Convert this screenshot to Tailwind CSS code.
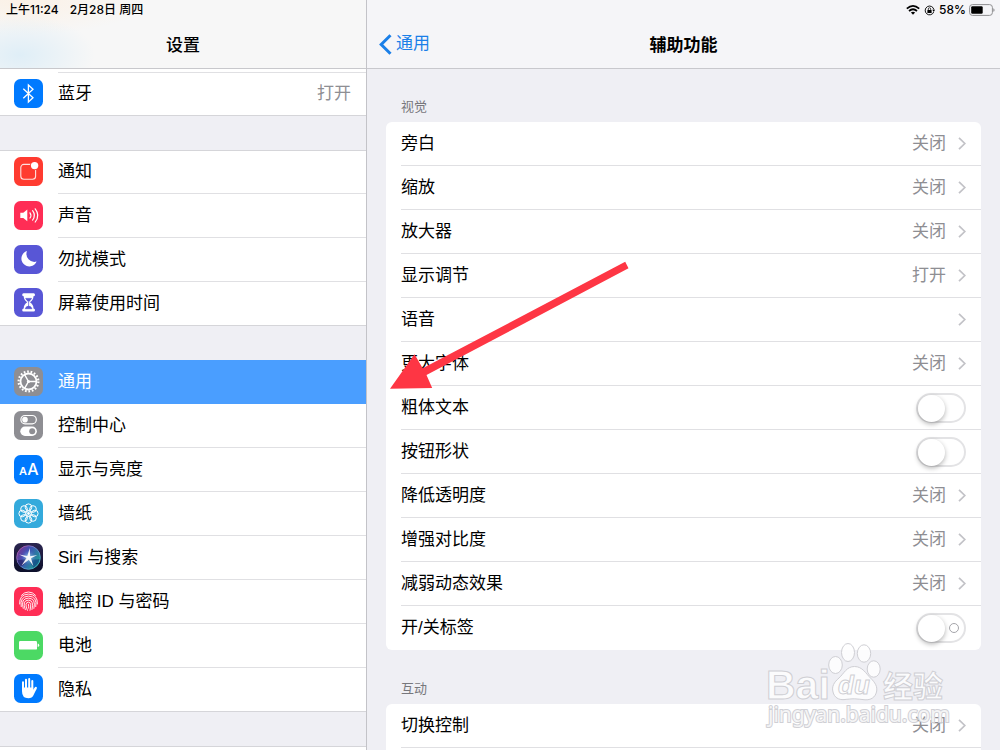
<!doctype html>
<html lang="zh-CN">
  <head>
    <meta charset="UTF-8" />
    <meta name="viewport" content="width=device-width, initial-scale=1.0" />
    <title>设置 - 辅助功能</title>
    <script src="https://cdn.jsdelivr.net/npm/@tailwindcss/browser@4"></script>
  </head>
  <body
    class="relative flex h-screen overflow-hidden bg-[#efeff4] font-['Liberation_Sans','Noto_Sans_CJK_SC',sans-serif] text-[17px] leading-6 text-black"
  >
    <svg class="hidden">
      <symbol id="chevron" viewBox="0 0 8 13">
        <path d="M1 .8 6.8 6.5 1 12.2" fill="none" stroke="#c2c2c7" stroke-width="1.7" />
      </symbol>
    </svg>

    <!-- Sidebar -->
    <aside class="flex w-[367px] shrink-0 flex-col overflow-hidden border-r border-[#c3c3c8]">
      <header
        class="h-[69px] shrink-0 border-b border-[#c8c8cc] bg-[#f7f7f7] bg-[radial-gradient(ellipse_75px_40px_at_20px_55px,#dfeef7,transparent),radial-gradient(ellipse_130px_35px_at_20px_0px,#fbf1e6,transparent)]"
      >
        <div class="flex h-5 items-center gap-[11px] pl-[6px] font-['Inter','Noto_Sans_CJK_SC',sans-serif] text-[12px] font-medium">
          <span>上午11:24</span>
          <span>2月28日 周四</span>
        </div>
        <h1 class="flex h-12 items-center justify-center font-['Noto_Sans_CJK_SC',sans-serif] font-medium">设置</h1>
      </header>

      <nav>
        <div class="bg-white pl-[58px]">
          <div class="h-1 border-b border-[#e0e0e3]"></div>
        </div>
        <ul class="border-b border-[#d5d5d9] bg-white">
          <li>
            <a href="#bluetooth" class="flex h-[42px] items-center gap-[15px] pl-[14px]">
              <svg class="mb-0.5 size-[29px] shrink-0" viewBox="0 0 29 29">
                <rect width="29" height="29" rx="6.5" fill="#007aff" />
                <path d="M9.3 9.7 19 18.8l-4.6 4.2V6l4.6 4.2-9.7 9.1" fill="none" stroke="#fff" stroke-width="1.3" />
              </svg>
              <span class="flex-1">蓝牙</span>
              <span class="pr-[15px] text-[#8e8e93]">打开</span>
            </a>
          </li>
        </ul>

        <ul class="mt-[34px] border-t border-[#d5d5d9] bg-white">
          <li>
            <a href="#notifications" class="-mt-px flex h-11 items-center gap-[15px] pl-[14px]">
              <svg class="mb-0.5 size-[29px] shrink-0" viewBox="0 0 29 29">
                <rect width="29" height="29" rx="6.5" fill="#ff3b30" />
                <rect x="6.8" y="7.4" width="14.8" height="14.8" rx="3" fill="none" stroke="#fff" stroke-opacity=".85" stroke-width="1.1" />
                <circle cx="20.6" cy="8.6" r="4.6" fill="#ff3b30" />
                <circle cx="20.6" cy="8.6" r="3.7" fill="#fff" />
              </svg>
              <span class="flex h-11 flex-1 items-center border-b border-[#e0e0e3]">通知</span>
            </a>
          </li>
          <li>
            <a href="#sounds" class="flex h-11 items-center gap-[15px] pl-[14px]">
              <svg class="mb-0.5 size-[29px] shrink-0" viewBox="0 0 29 29">
                <rect width="29" height="29" rx="6.5" fill="#ff2d55" />
                <path d="M6.3 11.8h3l4-3.2v11.6l-4-3.2h-3z" fill="#fff" />
                <path d="M16 11.8q1.8 2.6 0 5.2M18.6 9.7q3.6 4.7 0 9.4M21.2 7.8q5.2 6.6 0 13.2" fill="none" stroke="#fff" stroke-width="1.2" stroke-linecap="round" />
              </svg>
              <span class="flex h-11 flex-1 items-center border-b border-[#e0e0e3]">声音</span>
            </a>
          </li>
          <li>
            <a href="#dnd" class="flex h-11 items-center gap-[15px] pl-[14px]">
              <svg class="mb-0.5 size-[29px] shrink-0" viewBox="0 0 29 29">
                <rect width="29" height="29" rx="6.5" fill="#5856d6" />
                <path d="M13 6A7.9 7.9 0 1 0 22.6 16.6 8 8 0 0 1 13 6Z" fill="#fff" />
              </svg>
              <span class="flex h-11 flex-1 items-center border-b border-[#e0e0e3]">勿扰模式</span>
            </a>
          </li>
          <li>
            <a href="#screen-time" class="flex h-11 items-center gap-[15px] border-b border-[#d5d5d9] pl-[14px]">
              <svg class="mb-0.5 size-[29px] shrink-0" viewBox="0 0 29 29">
                <rect width="29" height="29" rx="6.5" fill="#5856d6" />
                <path d="M9.5 5.2h10.2q1.3 0 1.3 1.5t-1.5 1.5q0 3.600-3.500 6.100 3.500 2.500 3.500 6.100 1.500 0 1.500 1.500t-1.300 1.500H9.500q-1.300 0-1.300-1.500t1.500-1.500q0-3.600 3.500-6.100-3.500-2.500-3.500-6.100-1.500 0-1.500-1.500t1.300-1.500Z" fill="#fff" />
                <path d="M11.7 10.4h5.8q-.8 1.7-2.9 3.4-2.100-1.700-2.900-3.400ZM14.600 14v4.500M11.300 20.700q.5-2.200 3.300-2.600 2.800.4 3.300 2.600Z" fill="#5856d6" stroke="#5856d6" stroke-width=".7" />
              </svg>
              <span>屏幕使用时间</span>
            </a>
          </li>
        </ul>

        <ul class="mt-[34px] border-t border-[#d5d5d9] bg-white">
          <li>
            <a href="#general" aria-current="page" class="-mt-px flex h-11 items-center gap-[15px] bg-[#4a9eff] pl-[14px] text-white">
              <svg class="mb-0.5 size-[29px] shrink-0" viewBox="0 0 29 29">
                <rect width="29" height="29" rx="6.5" fill="#8e8e93" />
                <g fill="none" stroke="#fff">
                  <circle cx="14.5" cy="14.5" r="9.9" stroke-width="2.2" stroke-dasharray="1.7 1.76" />
                  <circle cx="14.5" cy="14.5" r="8" stroke-width="1.8" />
                  <path d="M14.5 14.5h8M14.5 14.5l-4-7M14.5 14.5l-4 7" stroke-width="1.5" />
                </g>
                <circle cx="14.5" cy="14.5" r="1.6" fill="#fff" />
              </svg>
              <span>通用</span>
            </a>
          </li>
          <li>
            <a href="#control-center" class="flex h-11 items-center gap-[15px] pl-[14px]">
              <svg class="mb-0.5 size-[29px] shrink-0" viewBox="0 0 29 29">
                <rect width="29" height="29" rx="6.5" fill="#8e8e93" />
                <rect x="6.9" y="4.5" width="15.4" height="8.3" rx="4.150" fill="none" stroke="#fff" stroke-width="1.2" />
                <circle cx="11" cy="8.650" r="2.800" fill="#fff" />
                <rect x="6.3" y="15.6" width="16.6" height="9.3" rx="4.650" fill="#fff" />
                <circle cx="18.2" cy="20.250" r="3" fill="#8e8e93" />
              </svg>
              <span class="flex h-11 flex-1 items-center border-b border-[#e0e0e3]">控制中心</span>
            </a>
          </li>
          <li>
            <a href="#display" class="flex h-11 items-center gap-[15px] pl-[14px]">
              <svg class="mb-0.5 size-[29px] shrink-0" viewBox="0 0 29 29">
                <rect width="29" height="29" rx="6.5" fill="#007aff" />
                <g fill="#fff" font-family="Inter, sans-serif" text-anchor="middle">
                  <text x="9" y="20" font-size="11" font-weight="600">A</text>
                  <text x="18.8" y="20" font-size="16" font-weight="500">A</text>
                </g>
              </svg>
              <span class="flex h-11 flex-1 items-center border-b border-[#e0e0e3]">显示与亮度</span>
            </a>
          </li>
          <li>
            <a href="#wallpaper" class="flex h-11 items-center gap-[15px] pl-[14px]">
              <svg class="mb-0.5 size-[29px] shrink-0" viewBox="0 0 29 29">
                <rect width="29" height="29" rx="6.5" fill="#34aadc" />
                <g fill="none" stroke="#fff" stroke-width="1">
                  <circle cx="14.5" cy="8.2" r="3.3" />
                  <circle cx="19" cy="10" r="3.3" />
                  <circle cx="20.8" cy="14.5" r="3.3" />
                  <circle cx="19" cy="19" r="3.3" />
                  <circle cx="14.5" cy="20.8" r="3.3" />
                  <circle cx="10" cy="19" r="3.3" />
                  <circle cx="8.2" cy="14.5" r="3.3" />
                  <circle cx="10" cy="10" r="3.3" />
                  <circle cx="14.5" cy="14.5" r="2.6" />
                </g>
                <circle cx="14.5" cy="14.5" r="1.4" fill="#fff" />
              </svg>
              <span class="flex h-11 flex-1 items-center border-b border-[#e0e0e3]">墙纸</span>
            </a>
          </li>
          <li>
            <a href="#siri" class="flex h-11 items-center gap-[15px] pl-[14px]">
              <svg class="mb-0.5 size-[29px] shrink-0" viewBox="0 0 29 29">
                <defs>
                  <linearGradient id="siri-bg" x1="0" y1="0" x2="0" y2="1">
                    <stop offset="0" stop-color="#2b2550" />
                    <stop offset="1" stop-color="#0c0f2a" />
                  </linearGradient>
                  <linearGradient id="siri-ring" x1="0" y1="0" x2="1" y2="1">
                    <stop offset="0" stop-color="#c04a9a" />
                    <stop offset=".5" stop-color="#6a88d8" />
                    <stop offset="1" stop-color="#39c6c0" />
                  </linearGradient>
                  <linearGradient id="siri-orb" x1="0" y1="0" x2="1" y2=".6">
                    <stop offset="0" stop-color="#8c2f86" />
                    <stop offset=".45" stop-color="#3f4fb4" />
                    <stop offset="1" stop-color="#1d9c94" />
                  </linearGradient>
                  <radialGradient id="siri-glow">
                    <stop offset="0" stop-color="#fff" />
                    <stop offset=".4" stop-color="#a4dcf4" stop-opacity=".6" />
                    <stop offset="1" stop-color="#4a55c8" stop-opacity="0" />
                  </radialGradient>
                </defs>
                <rect width="29" height="29" rx="6.5" fill="url(#siri-bg)" />
                <circle cx="14.5" cy="14.5" r="11.8" fill="url(#siri-orb)" stroke="url(#siri-ring)" stroke-width=".9" />
                <path d="M3.500 17q5 .5 9.500-2-1 6-6 8.500-3-2.500-3.500-6.500Z" fill="#2a2569" opacity=".8" />
                <path d="M16 16q5 1 9.500 0-1 5.500-6 8.500-3-3-3.500-8.500Z" fill="#134a86" opacity=".8" />
                <circle cx="14.5" cy="14.5" r="8" fill="url(#siri-glow)" opacity=".7" />
                <path d="m15.800 5 .3 8.300 7.200-1.300-6.300 3.300 2.400 8-4.600-6.500-7.300 5.700 5-7.500-7.500-3.500 8.300 1.500Z" fill="#fff" opacity=".9" />
              </svg>
              <span class="flex h-11 flex-1 items-center border-b border-[#e0e0e3]">Siri 与搜索</span>
            </a>
          </li>
          <li>
            <a href="#touch-id" class="flex h-11 items-center gap-[15px] pl-[14px]">
              <svg class="mb-0.5 size-[29px] shrink-0" viewBox="0 0 29 29">
                <rect width="29" height="29" rx="6.5" fill="#ff2d55" />
                <g fill="none" stroke="#fff" stroke-width=".9" stroke-linecap="round">
                  <path d="M7.5 8.3Q10.300 5 14.500 5t7 3.300" />
                  <path d="M5.600 17q-.5-9.600 8.900-9.900 9.400.3 8.900 9.900" />
                  <path d="M7.200 19.600q-1.800-10 7.300-10.500 9.100.5 7.300 10.500" />
                  <path d="M9.200 21.400q-3-9.900 5.300-10.300 7.800.4 5.400 10.300" />
                  <path d="M11.300 22.700q-3.600-9.300 3.200-9.600 5.700.3 3.500 9.400" />
                  <path d="M13.400 23.300q-3.400-8 1.100-8.200 3.600.3 1.500 8.200" />
                  <path d="M14.400 17.200q.4 2 .3 4" />
                </g>
              </svg>
              <span class="flex h-11 flex-1 items-center border-b border-[#e0e0e3]">触控 ID 与密码</span>
            </a>
          </li>
          <li>
            <a href="#battery" class="flex h-11 items-center gap-[15px] pl-[14px]">
              <svg class="mb-0.5 size-[29px] shrink-0" viewBox="0 0 29 29">
                <rect width="29" height="29" rx="6.5" fill="#4cd964" />
                <rect x="5" y="10" width="18" height="8.6" rx="1.2" fill="#fff" />
                <path d="M23.700 12.600q1.500.2 1.500 1.700t-1.500 1.700Z" fill="#fff" />
              </svg>
              <span class="flex h-11 flex-1 items-center border-b border-[#e0e0e3]">电池</span>
            </a>
          </li>
          <li>
            <a href="#privacy" class="flex h-11 items-center gap-[15px] border-b border-[#d5d5d9] pl-[14px]">
              <svg class="mb-0.5 size-[29px] shrink-0" viewBox="0 0 29 29">
                <rect width="29" height="29" rx="6.5" fill="#007aff" />
                <g fill="none" stroke="#fff" stroke-width="2" stroke-linecap="round">
                  <path d="M9 15V8.300M12 14V5.800M15.200 14V5M18.300 14V7" />
                  <path d="m18.500 18 3.400-4.300" />
                </g>
                <path d="M8 13.500h11.300v3.200l2.400-2.800 1.200.7q-2 3.600-3.300 6.400-1.500 3.300-5.200 3.300-6.400 0-6.400-7Z" fill="#fff" />
              </svg>
              <span>隐私</span>
            </a>
          </li>
        </ul>

        <div class="mt-[34px] h-11 border-t border-[#d5d5d9] bg-white"></div>
      </nav>
    </aside>

    <!-- Detail pane -->
    <main class="flex min-w-0 flex-1 flex-col overflow-hidden">
      <header class="h-[69px] shrink-0 border-b border-[#c8c8cd] bg-[#f5f5f8]">
        <div class="flex h-5 items-center justify-end gap-[3px] pr-[5px] font-['Inter',sans-serif] text-[12px] font-medium">
          <svg class="h-[10px] w-[14px]" viewBox="0 0 14 10">
            <g fill="none" stroke="#000" stroke-width="1.7">
              <path d="M.8 3.700q6.200-5.600 12.400 0" />
              <path d="M3 6q4-3.500 8 0" />
            </g>
            <path d="M7 9.700 4.900 7.500q2.100-1.600 4.200 0Z" />
          </svg>
          <svg class="mx-px size-[11px]" viewBox="0 0 12 12">
            <path d="M10.600 7.600A4.800 4.800 0 1 1 10.800 5" fill="none" stroke="#000" stroke-width="1" />
            <path d="m9 5.300h3l-1.300 2.200Z" />
            <rect x="3.7" y="5.4" width="4.6" height="3.4" rx=".4" />
            <path d="M4.700 5.600V4.300q0-1.300 1.300-1.300t1.300 1.300v1.300" fill="none" stroke="#000" stroke-width=".8" />
          </svg>
          <span>58%</span>
          <svg class="h-3 w-[26px]" viewBox="0 0 26 12">
            <rect x=".6" y=".6" width="22.8" height="10.8" rx="2.8" fill="none" stroke="#8f8f91" />
            <rect x="2.2" y="2.2" width="11.5" height="7.6" rx="1.2" />
            <path d="M24.300 4.200q1.300.4 1.300 1.800t-1.300 1.800Z" fill="#8f8f91" />
          </svg>
        </div>
        <div class="grid h-12 grid-cols-3 items-center">
          <a href="#general" class="flex items-center gap-1 pl-3 text-[#1a7fe8]">
            <svg class="h-[21px] w-[13px]" viewBox="0 0 13 21">
              <path d="M11.500 1.200 2.200 10.500l9.300 9.300" fill="none" stroke="#1a7fe8" stroke-width="3" />
            </svg>
            通用
          </a>
          <h2 class="text-center font-['Noto_Sans_CJK_SC',sans-serif] font-bold">辅助功能</h2>
        </div>
      </header>

      <div class="px-[19px]">
        <h3 class="flex h-[53px] items-end pb-[5px] pl-[15px] text-[13px] leading-5 text-[#77777c]">视觉</h3>
        <ul class="rounded-md bg-white pl-[15px]">
          <li>
            <a href="#voiceover" class="flex h-11 items-center gap-3 border-b border-[#e0e0e3] pr-[15px]">
              <span class="flex-1">旁白</span>
              <span class="text-[#8e8e93]">关闭</span>
              <svg class="h-[13px] w-2"><use href="#chevron" /></svg>
            </a>
          </li>
          <li>
            <a href="#zoom" class="flex h-11 items-center gap-3 border-b border-[#e0e0e3] pr-[15px]">
              <span class="flex-1">缩放</span>
              <span class="text-[#8e8e93]">关闭</span>
              <svg class="h-[13px] w-2"><use href="#chevron" /></svg>
            </a>
          </li>
          <li>
            <a href="#magnifier" class="flex h-11 items-center gap-3 border-b border-[#e0e0e3] pr-[15px]">
              <span class="flex-1">放大器</span>
              <span class="text-[#8e8e93]">关闭</span>
              <svg class="h-[13px] w-2"><use href="#chevron" /></svg>
            </a>
          </li>
          <li>
            <a href="#display-accommodations" class="flex h-11 items-center gap-3 border-b border-[#e0e0e3] pr-[15px]">
              <span class="flex-1">显示调节</span>
              <span class="text-[#8e8e93]">打开</span>
              <svg class="h-[13px] w-2"><use href="#chevron" /></svg>
            </a>
          </li>
          <li>
            <a href="#speech" class="flex h-11 items-center gap-3 border-b border-[#e0e0e3] pr-[15px]">
              <span class="flex-1">语音</span>
              <svg class="h-[13px] w-2"><use href="#chevron" /></svg>
            </a>
          </li>
          <li>
            <a href="#larger-text" class="flex h-11 items-center gap-3 border-b border-[#e0e0e3] pr-[15px]">
              <span class="flex-1">更大字体</span>
              <span class="text-[#8e8e93]">关闭</span>
              <svg class="h-[13px] w-2"><use href="#chevron" /></svg>
            </a>
          </li>
          <li class="flex h-11 items-center border-b border-[#e0e0e3] pr-[15px]">
            <label for="bold-text" class="flex-1">粗体文本</label>
            <input
              id="bold-text"
              type="checkbox"
              role="switch"
              class="h-[30px] w-[50px] appearance-none rounded-full border-2 border-[#e3e3e5] bg-white before:block before:size-[27px] before:rounded-full before:bg-white before:shadow-[0_2px_5px_#0000004d] checked:bg-[#4cd964] checked:before:ml-5"
            />
          </li>
          <li class="flex h-11 items-center border-b border-[#e0e0e3] pr-[15px]">
            <label for="button-shapes" class="flex-1">按钮形状</label>
            <input
              id="button-shapes"
              type="checkbox"
              role="switch"
              class="h-[30px] w-[50px] appearance-none rounded-full border-2 border-[#e3e3e5] bg-white before:block before:size-[27px] before:rounded-full before:bg-white before:shadow-[0_2px_5px_#0000004d] checked:bg-[#4cd964] checked:before:ml-5"
            />
          </li>
          <li>
            <a href="#reduce-transparency" class="flex h-11 items-center gap-3 border-b border-[#e0e0e3] pr-[15px]">
              <span class="flex-1">降低透明度</span>
              <span class="text-[#8e8e93]">关闭</span>
              <svg class="h-[13px] w-2"><use href="#chevron" /></svg>
            </a>
          </li>
          <li>
            <a href="#increase-contrast" class="flex h-11 items-center gap-3 border-b border-[#e0e0e3] pr-[15px]">
              <span class="flex-1">增强对比度</span>
              <span class="text-[#8e8e93]">关闭</span>
              <svg class="h-[13px] w-2"><use href="#chevron" /></svg>
            </a>
          </li>
          <li>
            <a href="#reduce-motion" class="flex h-11 items-center gap-3 border-b border-[#e0e0e3] pr-[15px]">
              <span class="flex-1">减弱动态效果</span>
              <span class="text-[#8e8e93]">关闭</span>
              <svg class="h-[13px] w-2"><use href="#chevron" /></svg>
            </a>
          </li>
          <li class="flex h-11 items-center pr-[15px]">
            <label for="on-off-labels" class="flex-1">开/关标签</label>
            <input
              id="on-off-labels"
              type="checkbox"
              role="switch"
              class="flex h-[30px] w-[50px] appearance-none items-center gap-1 rounded-full border-2 border-[#e3e3e5] bg-white before:size-[27px] before:rounded-full before:bg-white before:shadow-[0_2px_5px_#0000004d] after:size-[10px] after:rounded-full after:border after:border-[#a5a5aa] checked:flex-row-reverse checked:bg-[#4cd964]"
            />
          </li>
        </ul>

        <h3 class="flex h-[54px] items-end pb-[5px] pl-[15px] text-[13px] leading-5 text-[#77777c]">互动</h3>
        <ul class="rounded-t-md bg-white pl-[15px]">
          <li>
            <a href="#switch-control" class="flex h-11 items-center gap-3 border-b border-[#e0e0e3] pr-[15px]">
              <span class="flex-1">切换控制</span>
              <span class="text-[#8e8e93]">关闭</span>
              <svg class="h-[13px] w-2"><use href="#chevron" /></svg>
            </a>
          </li>
          <li class="h-11"></li>
        </ul>
      </div>
    </main>

    <!-- Red pointer drawn over the list -->
    <svg class="pointer-events-none absolute top-[255px] left-[380px] h-[140px] w-[260px]" viewBox="0 0 260 140">
      <path d="M10 133.700 34.500 99.300l8.200 14L245.200 6.800l3.300 6.500L46.500 120l5.700 13Z" fill="#fe3644" />
    </svg>

    <!-- Watermark -->
    <svg class="pointer-events-none absolute right-0 bottom-0 h-[120px] w-[250px]" viewBox="0 0 250 120">
      <g fill="#fff" fill-opacity=".8" stroke="#cfcfd4" stroke-width="1">
        <text x="16" y="69" font-family="Liberation Sans, sans-serif" font-size="41" font-weight="700">Bai</text>
        <ellipse cx="85.5" cy="35" rx="6.8" ry="8.5" />
        <ellipse cx="98" cy="22.5" rx="6.5" ry="9" />
        <ellipse cx="114" cy="23.5" rx="6.7" ry="8.7" />
        <ellipse cx="123.7" cy="39" rx="6.5" ry="8.2" />
        <path d="M104.500 36.500c-8 0-10.500 7-15.500 11.500-5 4.300-7.500 8.500-6 14 1.400 5.500 5.500 8 11 7.600 4-.4 7-.8 10.500-.8s7 .8 10.500 1c6 .3 10-2.300 11.500-7.800 1.300-5.500-1.500-9.500-6-14-4.500-4.300-8-11.500-16-11.500Z" />
        <text x="88" y="64" font-family="Liberation Sans, sans-serif" font-size="26" font-style="italic" font-weight="700">du</text>
        <text x="133" y="67" font-family="Noto Sans CJK SC, sans-serif" font-size="30" font-weight="700">经验</text>
      </g>
      <text x="18" y="92" fill="#fff" fill-opacity=".8" stroke="#d0d0d5" stroke-width="2" paint-order="stroke" font-family="Noto Sans, sans-serif" font-size="21">jingyan.baidu.com</text>
    </svg>
  </body>
</html>
